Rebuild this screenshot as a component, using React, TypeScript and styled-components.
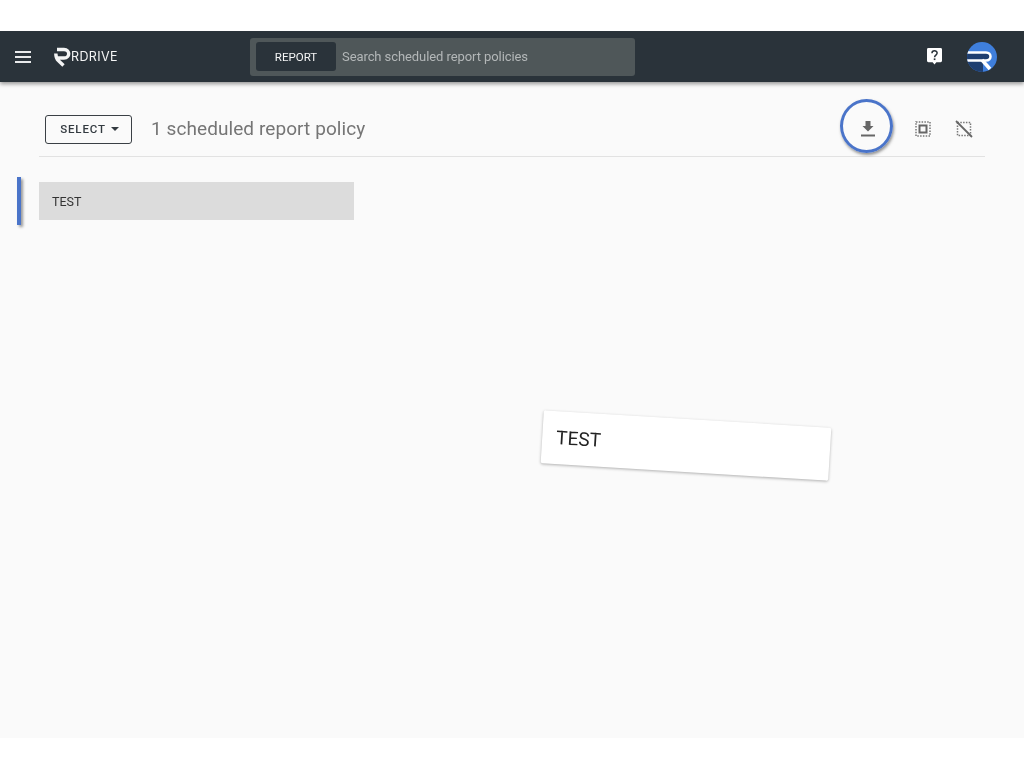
import React from "react";
import styled, { createGlobalStyle } from "styled-components";

const Global = createGlobalStyle`
  html, body { margin: 0; padding: 0; background: #fff; }
  body { font-family: Roboto, "Liberation Sans", sans-serif; }
`;

const Page = styled.div`
  width: 1024px;
  height: 768px;
  padding-top: 31px;
  box-sizing: border-box;
  overflow: hidden;
  background: #fff;
`;

const Screen = styled.div`
  position: relative;
  height: 707px;
  background: #fafafa;
  display: flex;
  flex-direction: column;
  overflow: hidden;
  filter: blur(0.35px);
`;

const TopBar = styled.header`
  height: 51px;
  flex: none;
  background: #2a333a;
  box-shadow: 0 2px 4px rgba(0, 0, 0, 0.4);
  display: flex;
  align-items: center;
  padding: 0 27px 0 15px;
  z-index: 1;
`;

const Brand = styled.div`
  display: flex;
  align-items: center;
  margin-left: 23px;
  width: 196px;
`;

const BrandName = styled.span`
  color: #f4f5f5;
  font-family: Inter, Roboto, sans-serif;
  font-size: 12.5px;
  font-weight: 400;
  letter-spacing: 0.4px;
  margin-left: -1px;
`;

const SearchBox = styled.div`
  width: 385px;
  height: 38px;
  box-sizing: border-box;
  background: #4f5759;
  border-radius: 3px;
  display: flex;
  align-items: center;
  padding: 0 6px;
`;

const ScopeChip = styled.div`
  width: 80px;
  height: 29px;
  background: #2a333a;
  border-radius: 3px;
  color: #f4f5f5;
  font-size: 11.5px;
  font-weight: 400;
  display: flex;
  align-items: center;
  justify-content: center;
`;

const SearchHint = styled.span`
  color: #b3b7b8;
  font-size: 13px;
  margin-left: 6px;
  letter-spacing: -0.08px;
`;

const BarActions = styled.div`
  margin-left: auto;
  display: flex;
  align-items: center;
  gap: 25px;
`;

const Toolbar = styled.div`
  margin: 0 39px;
  height: 75px;
  flex: none;
  box-sizing: border-box;
  border-bottom: 1px solid #e2e2e2;
  display: flex;
  align-items: center;
  padding: 20px 11px 0 6px;
`;

const SelectButton = styled.button`
  width: 87px;
  height: 29px;
  box-sizing: border-box;
  padding: 0 0 0 2px;
  background: transparent;
  border: 1px solid #3a4045;
  border-radius: 3px;
  color: #333a40;
  font-family: inherit;
  font-size: 11.5px;
  font-weight: 500;
  letter-spacing: 0.85px;
  display: flex;
  align-items: center;
  justify-content: center;
  gap: 5px;
`;

const Caret = styled.span`
  width: 0;
  height: 0;
  border-left: 4px solid transparent;
  border-right: 4px solid transparent;
  border-top: 4px solid #333a40;
`;

const Count = styled.h1`
  margin: -2px 0 0 19px;
  font-size: 19px;
  font-weight: 400;
  color: #757575;
  letter-spacing: 0.08px;
`;

const ToolActions = styled.div`
  margin-left: auto;
  display: flex;
  align-items: center;
`;

const IconSlot = styled.div<{ $w: number; $ml?: number }>`
  position: relative;
  width: ${(p) => p.$w}px;
  margin-left: ${(p) => p.$ml ?? 0}px;
  display: flex;
  justify-content: center;
`;

const Highlight = styled.div`
  position: absolute;
  left: 50%;
  top: 50%;
  width: 53px;
  height: 54px;
  box-sizing: border-box;
  transform: translate(calc(-50% - 1.5px), calc(-50% - 3px));
  border: 3px solid #4a74c9;
  border-radius: 50%;
  box-shadow: 1px 2px 3px rgba(60, 60, 60, 0.55);
`;

const ListArea = styled.div`
  display: flex;
  align-items: center;
  margin-top: 20px;
  padding-left: 17px;
`;

const ActiveMark = styled.div`
  width: 4px;
  height: 48px;
  background: #4a74c9;
  box-shadow: 2px 2px 3px rgba(0, 0, 0, 0.4);
`;

const ListRow = styled.div`
  margin-left: 18px;
  width: 315px;
  height: 38px;
  background: #dcdcdc;
  color: #333;
  font-size: 12.5px;
  display: flex;
  align-items: center;
  padding-left: 13px;
  box-sizing: border-box;
`;

const DragGhost = styled.div`
  position: absolute;
  left: 542px;
  top: 388px;
  width: 288px;
  height: 53px;
  background: #fff;
  border-radius: 2px;
  box-shadow: 0 1px 3px rgba(0, 0, 0, 0.3);
  color: #222;
  font-size: 19px;
  display: flex;
  align-items: center;
  padding-left: 14px;
  box-sizing: border-box;
  transform: rotate(3.5deg);
`;

const Logo = () => (
  <svg width="18" height="20" viewBox="0 0 18 20" fill="none" aria-hidden="true">
    <path
      d="M3 2.500H10C16.300 2.500 16.300 11 10 11H2.500M1.800 6.500C1.800 9.500 2 11.500 4.500 13.800L9.500 18.500"
      stroke="#f4f5f5"
      strokeWidth="3.400"
      strokeLinejoin="round"
    />
  </svg>
);

const Menu = () => (
  <svg width="16" height="12" viewBox="0 0 16 12" aria-hidden="true">
    <path d="M0 0h16v2H0zM0 5h16v2H0zM0 10h16v2H0z" fill="#e8eaeb" />
  </svg>
);

const Help = () => (
  <svg width="15" height="17" viewBox="0 0 16 18" aria-hidden="true">
    <path d="M1.500 0h13A1.500 1.500 0 0 1 16 1.500v12a1.500 1.500 0 0 1-1.500 1.500H10l-2 2.500L6 15H1.500A1.500 1.500 0 0 1 0 13.500v-12A1.500 1.500 0 0 1 1.500 0z" fill="#fff" />
    <path d="M5.300 5.400C5.300 2 10.800 2 10.800 5.300c0 2.200-2.700 2.200-2.700 4.500" fill="none" stroke="#2a333a" strokeWidth="1.600" />
    <rect x="7.200" y="11" width="1.800" height="1.800" fill="#2a333a" />
  </svg>
);

const Avatar = () => (
  <svg width="30" height="30" viewBox="0 0 30 30" aria-hidden="true">
    <defs>
      <clipPath id="avatar-clip"><circle cx="15" cy="15" r="15" /></clipPath>
    </defs>
    <g clipPath="url(#avatar-clip)">
      <rect width="30" height="30" fill="#3f7fdc" />
      <rect y="19" width="16" height="11" fill="#1f3f70" />
      <path d="M0 10.500H19C25 10.500 25 18.500 19 18.500H0" fill="#1f3f70" stroke="#fff" strokeWidth="2.500" />
      <path d="M15 18L23 27" stroke="#fff" strokeWidth="3.500" />
    </g>
  </svg>
);

const Download = () => (
  <svg width="24" height="24" viewBox="0 0 24 24" aria-hidden="true">
    <path d="M17.500 9H14.500V4H9.500V9H6.500L12 14.500zM5 17.500V19.500H19V17.500z" fill="#666" />
  </svg>
);

const SelectAll = () => (
  <svg width="16" height="16" viewBox="0 0 16 16" aria-hidden="true">
    <rect x="1" y="1" width="14" height="14" fill="none" stroke="#777" strokeWidth="1.500" strokeDasharray="1.500 1.300" />
    <rect x="4.500" y="4.500" width="7" height="7" fill="none" stroke="#666" strokeWidth="2" />
  </svg>
);

const Deselect = () => (
  <svg width="18" height="18" viewBox="0 0 18 18" aria-hidden="true">
    <rect x="2.500" y="2.500" width="13" height="13" fill="none" stroke="#777" strokeWidth="1.500" strokeDasharray="1.500 1.300" />
    <path d="M1 1L17 17" stroke="#666" strokeWidth="1.800" />
  </svg>
);

export default function App() {
  return (
    <Page>
      <Global />
      <Screen>
        <TopBar>
          <Menu />
          <Brand>
            <Logo />
            <BrandName>RDRIVE</BrandName>
          </Brand>
          <SearchBox>
            <ScopeChip>REPORT</ScopeChip>
            <SearchHint>Search scheduled report policies</SearchHint>
          </SearchBox>
          <BarActions>
            <Help />
            <Avatar />
          </BarActions>
        </TopBar>
        <Toolbar>
          <SelectButton>
            SELECT
            <Caret />
          </SelectButton>
          <Count>1 scheduled report policy</Count>
          <ToolActions>
            <IconSlot $w={24}>
              <Highlight />
              <Download />
            </IconSlot>
            <IconSlot $w={20} $ml={33}>
              <SelectAll />
            </IconSlot>
            <IconSlot $w={20} $ml={21}>
              <Deselect />
            </IconSlot>
          </ToolActions>
        </Toolbar>
        <ListArea>
          <ActiveMark />
          <ListRow>TEST</ListRow>
        </ListArea>
        <DragGhost>TEST</DragGhost>
      </Screen>
    </Page>
  );
}
